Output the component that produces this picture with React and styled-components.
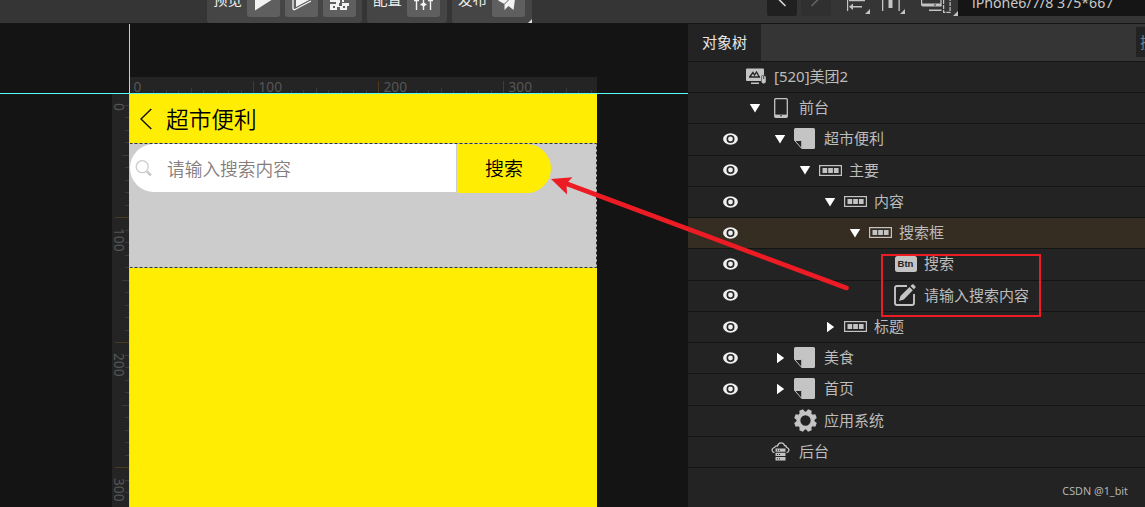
import React from "react";
import styled, { createGlobalStyle, css } from "styled-components";

const Global = createGlobalStyle`
  * { box-sizing: border-box; }
  html, body { margin: 0; height: 100%; overflow: hidden; background: #141414; }
  body { font-family: "Noto Sans", "Noto Sans CJK SC", sans-serif; font-weight: 370; }
  svg { display: block; flex: none; }
`;

const Frame = styled.div`
  position: relative;
  width: 1145px;
  height: 507px;
  overflow: hidden;
  display: flex;
  flex-direction: column;
  background: #141414;
`;

/* ---------- toolbar ---------- */
const Toolbar = styled.header`
  flex: none;
  display: flex;
  height: 23px;
  padding-left: 207px;
  background: #353535;
  margin-bottom: 1px;
  overflow: hidden;
`;
const Group = styled.div`
  flex: none;
  position: relative;
  display: flex;
  align-items: flex-end;
  width: ${(p) => p.$w}px;
  height: 23px;
  margin-right: 5px;
  padding: 0 7px 6px 6px;
  gap: 5px;
  background: #454545;
  border-radius: 0 0 3px 3px;
`;
const GroupLabel = styled.span`
  flex: 1;
  font-size: 14.5px;
  line-height: 20px;
  margin-bottom: 8px;
  color: #f0f0f0;
  white-space: nowrap;
`;
const ToolButton = styled.div`
  flex: none;
  display: flex;
  align-items: flex-end;
  justify-content: center;
  width: 33px;
  height: 33px;
  background: #5f5f5f;
  border-radius: 3px;
`;
const Corner = styled.i`
  position: absolute;
  right: 0;
  bottom: 0;
  border: 2.5px solid;
  border-color: transparent #dcdcdc #dcdcdc transparent;
`;
const RightTools = styled.div`
  flex: 1;
  display: flex;
  align-items: flex-start;
  padding-left: 230px;
`;
const NavButton = styled.div`
  flex: none;
  display: flex;
  justify-content: center;
  width: 30px;
  height: 16px;
  margin-right: 4px;
  border-radius: 0 0 2px 2px;
  background: ${(p) => (p.$off ? "#303030" : "#202020")};
`;
const AlignTools = styled.div`
  flex: none;
  width: 123px;
  padding-left: 11px;
`;
const Device = styled.div`
  flex: 1;
  height: 16px;
  padding-left: 14px;
  background: #151515;
  color: #c8c8c8;
  font-size: 14.2px;
  line-height: 20px;
  white-space: nowrap;
  overflow: hidden;
`;
const DeviceText = styled.div`
  margin-top: -7px;
`;

/* ---------- canvas ---------- */
const Body = styled.div`
  flex: 1;
  min-height: 0;
  display: flex;
`;
const Canvas = styled.section`
  flex: none;
  width: 688px;
  display: grid;
  grid-template-columns: 17px 468px;
  grid-template-rows: 17px 1fr;
  padding: 53px 91px 0 112px;
  background: #141414;
`;
const Blank = styled.div``;
const Ruler = styled.div`
  background: #242424;
  overflow: hidden;
`;
const Phone = styled.main`
  display: flex;
  flex-direction: column;
  background: #ffed04;
  font-family: "Noto Sans CJK SC", sans-serif;
  overflow: hidden;
`;
const TitleBar = styled.div`
  flex: none;
  display: flex;
  align-items: center;
  height: 49px;
  padding-left: 11px;
  gap: 14px;
  color: #000;
  font-size: 22.7px;
  font-weight: 350;
  line-height: 48px;
`;
const SearchArea = styled.div`
  flex: none;
  position: relative;
  display: flex;
  align-items: flex-start;
  gap: 1px;
  height: 125px;
  padding: 1px;
  background: #ccc;
`;
const Outline = styled.svg`
  position: absolute;
  inset: 0;
`;
const SearchInput = styled.div`
  display: flex;
  align-items: center;
  width: 326px;
  height: 48px;
  padding-left: 5px;
  gap: 14px;
  background: #fff;
  border-radius: 24px 0 0 24px;
  color: #857c7c;
  font-size: 17.7px;
  font-weight: 350;
`;
const SearchButton = styled.div`
  width: 94px;
  height: 49px;
  background: #ffed04;
  border-radius: 0 25px 25px 0;
  text-align: center;
  color: #000;
  font-size: 19px;
  font-weight: 350;
  line-height: 47px;
`;
const Guide = styled.div`
  position: absolute;
  background: #57fbfb;
  ${(p) =>
    p.$vertical
      ? css`left: 129px; top: 24px; width: 1px; height: 483px;`
      : css`left: 0; top: 93px; width: 688px; height: 1px;`}
`;

/* ---------- tree ---------- */
const Panel = styled.aside`
  flex: 1;
  background: #232323;
  overflow: hidden;
`;
const Tabs = styled.div`
  display: flex;
  justify-content: space-between;
  height: 37.75px;
  background: #353535;
  border-bottom: 1px solid #151515;
`;
const Tab = styled.div`
  width: 73px;
  background: #232323;
  color: #e6e6e6;
  font-size: 15px;
  line-height: 37px;
  text-align: center;
`;
const Filter = styled.div`
  width: 9px;
  height: 30px;
  margin-top: 3px;
  padding-left: 4px;
  background: #232323;
  color: #6d7f92;
  font-size: 15px;
  line-height: 30px;
  overflow: hidden;
`;
const Row = styled.div`
  display: flex;
  align-items: center;
  height: 31.25px;
  padding-bottom: 0.4px;
  border-bottom: 1px solid #141414;
  background: ${(p) => (p.$active ? "#362d22" : "#232323")};
  color: #bcbcbc;
  font-size: 15px;
  line-height: 29.6px;
`;
const EyeCell = styled.div`
  flex: none;
  width: 50px;
  padding-left: 35px;
`;
const Toggle = styled.div`
  flex: none;
  display: flex;
  justify-content: center;
  width: 16px;
  margin-left: ${(p) => p.$indent}px;
`;
const IconCell = styled.div`
  flex: none;
  display: flex;
  justify-content: center;
  width: 34px;
`;
const Name = styled.span`
  padding-left: 2px;
  white-space: nowrap;
`;
const Watermark = styled.div`
  position: absolute;
  right: 17px;
  top: 484px;
  color: #b4b4b4;
  font-size: 10.8px;
  font-weight: 400;
  line-height: 14px;
  white-space: nowrap;
`;
const Annotation = styled.svg`
  position: absolute;
  left: 0;
  top: 0;
`;

const C = "#c4c4c4";

const Eye = () => (
  <svg width="15" height="12" viewBox="0 0 15 12">
    <ellipse cx="7.5" cy="6" rx="7.4" ry="5.7" fill="#efefef" />
    <circle cx="7.5" cy="6" r="3.2" fill="none" stroke="#262626" strokeWidth="1.6" />
  </svg>
);

const Arrow = ({ open }) => (
  <svg width="12" height="12" viewBox="0 0 12 12">
    <path d={open ? "M.8 2h10.400L6 10.400z" : "M3 .8v10.400L10.200 6z"} fill="#fff" />
  </svg>
);

const icons = {
  project: (
    <svg width="22" height="17" viewBox="-2 0 22 17">
      <path d="M1 .5h16q1 0 1 1V7a3 3 0 0 0-3 3v3H1q-1 0-1-1V1.500q0-1 1-1zM5 14.500h8V16H5z" fill={C} />
      <path d="M3 9h11M4 8.500 7 4.500 8.500 7 10.500 4 13 8.500" fill="none" stroke="#232323" strokeWidth="1.300" />
      <rect x="15.500" y="7.500" width="4.300" height="8" rx="2.100" fill={C} />
      <path d="M17.700 8v3" stroke="#232323" strokeWidth=".8" />
    </svg>
  ),
  phone: (
    <svg width="15" height="20" viewBox="-1 0 15 20">
      <rect x=".7" y=".7" width="12.600" height="18.600" rx="1" fill="none" stroke={C} strokeWidth="1.300" />
      <path d="M1 17.800h12" stroke={C} strokeWidth="2.400" />
      <circle cx="7" cy="17.800" r=".8" fill="#232323" />
    </svg>
  ),
  page: (
    <svg width="22" height="22" viewBox="0 0 22 22">
      <path d="M1.500 0h18q1.500 0 1.500 1.500v18q0 1.500-1.500 1.500H8V12.500H0V1.500Q0 0 1.500 0z" fill={C} />
      <path d="M.7 12.500h7v8z" fill="#232323" stroke={C} strokeWidth="1" />
    </svg>
  ),
  row: (
    <svg width="23" height="11" viewBox="0 0 23 11">
      <rect x=".6" y=".6" width="21.800" height="9.800" fill="none" stroke={C} strokeWidth="1.200" />
      <path d="M3.500 3h4.700v5H3.500zM9.200 3h4.700v5H9.200zM14.900 3h4.700v5h-4.700z" fill={C} />
    </svg>
  ),
  edit: (
    <svg width="22" height="22" viewBox="0 0 22 22">
      <path d="M13 2H3Q1 2 1 4v15q0 2 2 2h15q2 0 2-2V10" fill="none" stroke={C} strokeWidth="1.900" />
      <path d="m5 17 1.500-5L15.500 3l3.300 3.300L9.800 15.500zM16.500 2 18 .5q.8-.7 1.600 0l1.700 1.700q.7.800 0 1.600L19.800 5.300z" fill={C} />
    </svg>
  ),
  gear: (
    <svg width="23" height="23" viewBox="-11.800 -11.800 23.600 23.600">
      <circle r="7.300" fill="none" stroke={C} strokeWidth="4" />
      {[22.5, 67.5, 112.5, 157.5, 202.5, 247.5, 292.5, 337.5].map((a) => (
        <path key={a} d="M-3-8.500-2-11.700H2L3-8.500z" transform={`rotate(${a})`} fill={C} />
      ))}
    </svg>
  ),
  cloud: (
    <svg width="19" height="19" viewBox="0 0 19 19">
      <path d="M3.500 10.500C.5 10 0 6.500 3.500 5.500 4.500 3.500 6 4 6.500 4 7.500 0 12.500 0 13.500 3.500c2 0 2 1.500 2 2 3.500 1 3 4.500 0 5" fill="none" stroke={C} strokeWidth="1.300" />
      <path d="M4.500 6.500h10v3.300h-10zM4.500 10.800h10v3.300h-10zM4.500 15.100h10v3.300h-10z" fill={C} />
      <path d="M6 8.200h1M8 8.200h1M6 12.500h1M8 12.500h1M6 16.800h1M8 16.800h1" stroke="#232323" />
    </svg>
  ),
};

const BtnBadge = styled.div`
  width: 22px;
  height: 16px;
  margin-left: 1px;
  border-radius: 2.5px;
  background: ${C};
  color: #232323;
  font: 700 9.5px/16px "Liberation Sans", sans-serif;
  text-align: center;
`;
icons.button = <BtnBadge>Btn</BtnBadge>;

const rows = [
  { depth: -1, icon: "project", name: "[520]美团2" },
  { depth: 0, icon: "phone", name: "前台", open: true },
  { depth: 1, icon: "page", name: "超市便利", open: true, eye: true },
  { depth: 2, icon: "row", name: "主要", open: true, eye: true },
  { depth: 3, icon: "row", name: "内容", open: true, eye: true },
  { depth: 4, icon: "row", name: "搜索框", open: true, eye: true, active: true },
  { depth: 5, icon: "button", name: "搜索", eye: true },
  { depth: 5, icon: "edit", name: "请输入搜索内容", eye: true },
  { depth: 3, icon: "row", name: "标题", open: false, eye: true },
  { depth: 1, icon: "page", name: "美食", open: false, eye: true },
  { depth: 1, icon: "page", name: "首页", open: false, eye: true },
  { depth: 1, icon: "gear", name: "应用系统" },
  { depth: 0, icon: "cloud", name: "后台" },
];

const TICK = "#3a3a3a";
const MAJOR = "#4d3b1b";
const rulerFont = '"Noto Sans", sans-serif';

const TopRuler = () => (
  <svg width="468" height="17">
    {Array.from({ length: 38 }, (_, i) => {
      const m = i % 10;
      if (i === 0 || i === 1 || (i > 10 && (m === 1 || m === 2))) return null;
      const h = m === 0 ? 12 : m === 5 ? 5 : 3;
      return <rect key={i} x={Math.floor(i * 12.5 - 0.5)} y={16 - h} width="1" height={h} fill={m ? TICK : MAJOR} />;
    })}
    {[0, 100, 200, 300].map((n) => (
      <text key={n} x={n * 1.25 + 4.5} y="14.500" fontSize="13.700" fill="#565656" fontFamily={rulerFont}>{n}</text>
    ))}
  </svg>
);

const LeftRuler = () => (
  <svg width="17" height="413">
    {Array.from({ length: 33 }, (_, i) => {
      const m = i % 10;
      if (i === 0) return null;
      const w = m === 0 ? 14 : m === 5 ? 7 : 4;
      return <rect key={i} x={17 - w} y={Math.floor(i * 12.5 - 1.5)} width={w} height="1" fill={m ? TICK : MAJOR} />;
    })}
    {[0, 100, 200, 300].map((n) => (
      <text key={n} transform={`translate(2 ${n * 1.25 + 9}) rotate(90)`} fontSize="13.700" fill="#565656" fontFamily={rulerFont}>{n}</text>
    ))}
  </svg>
);

export default function App() {
  return (
    <Frame>
      <Global />
      <Toolbar>
        <Group $w={155}>
          <GroupLabel>预览</GroupLabel>
          <ToolButton>
            <svg width="33" height="33"><path d="M8 8v18.500L24.500 16V8z" fill="#f2f2f2" /></svg>
          </ToolButton>
          <ToolButton>
            <svg width="33" height="33">
              <path d="M11 8v15L25 15.500V8z" fill="#f2f2f2" />
              <path d="M8 8v16q0 2 2 1.500L26 17" fill="none" stroke="#f2f2f2" strokeWidth="1.300" />
            </svg>
          </ToolButton>
          <ToolButton>
            <svg width="33" height="33">
              <path d="M8 12h6v4h3v3h-4v-1H7v-3h1zM7 20h6v-1h3v3h3v-3h7v3h-2v4h-7v-3h-3v3H7zM19 12h6v4h-4v2h-2z" fill="#f2f2f2" />
              <path d="M10 22h2v2h-2zM20 22h2v2h-2z" fill="#5f5f5f" />
            </svg>
          </ToolButton>
        </Group>
        <Group $w={80}>
          <GroupLabel>配置</GroupLabel>
          <ToolButton>
            <svg width="33" height="33">
              <path d="M9.500 10v16M16.500 10v16M23.500 10v16M13.500 20.500h6M7 16.500h5M21 16.500h5" stroke="#f2f2f2" strokeWidth="1.400" />
              <circle cx="16.500" cy="20.500" r="2" fill="#f2f2f2" />
            </svg>
          </ToolButton>
        </Group>
        <Group $w={80}>
          <GroupLabel>发布</GroupLabel>
          <ToolButton>
            <svg width="33" height="33">
              <path d="M6 16.500 24 8l-2.500 18-5-4-4 4v-6z" fill="#f2f2f2" />
              <path d="m12 20.500 7-7" stroke="#5f5f5f" />
            </svg>
          </ToolButton>
          <Corner />
        </Group>
        <RightTools>
          <NavButton>
            <svg width="30" height="16"><path d="m10.500-2 8 8" stroke="#d8d8d8" strokeWidth="1.600" /></svg>
          </NavButton>
          <NavButton $off>
            <svg width="30" height="16"><path d="m18.500-2-8 8" stroke="#646464" strokeWidth="1.600" /></svg>
          </NavButton>
          <AlignTools>
            <svg width="112" height="16" fill={C}>
              <path d="M1 0h1.200v11H1zM3 0h16v1.300H3zM4 6h12v1.400H4zM3 6.700 7 3.500v6.400zM24 9v5H19z" />
              <path d="M36 0h1.300v11H36zM42.500 0h4v8h-4zM52.500 0h1.300v11h-1.300zM59 9v5h-5z" />
              <path d="M75 3.500h20.500v3H77q-2 0-2-2zM83 9.500h12.500V11H83z" />
              <path d="M75.600 0v5M95 0v6M97.600 0v12.300h6.500V0" fill="none" stroke={C} strokeWidth="1.200" strokeDasharray="4 1" />
              <path d="M88 4.500h2v1h-2z" fill="#353535" />
              <path d="M112 11v5h-5z" />
            </svg>
          </AlignTools>
          <Device><DeviceText>iPhone6/7/8 375*667</DeviceText></Device>
        </RightTools>
      </Toolbar>

      <Body>
        <Canvas>
          <Blank />
          <Ruler><TopRuler /></Ruler>
          <Ruler><LeftRuler /></Ruler>
          <Phone>
            <TitleBar>
              <svg width="12" height="22"><path d="M11.300 1 1 11l10.300 10" fill="none" stroke="#111" strokeWidth="1.400" /></svg>
              超市便利
            </TitleBar>
            <SearchArea>
              <SearchInput>
                <svg width="18" height="18" viewBox="0 0 18 18">
                  <circle cx="7.200" cy="7.700" r="6" fill="none" stroke="#ccc" strokeWidth="1.300" />
                  <path d="m12 12.500 4 4" stroke="#ccc" strokeWidth="2.600" />
                </svg>
                请输入搜索内容
              </SearchInput>
              <SearchButton>搜索</SearchButton>
              <Outline width="468" height="125">
                <rect x=".5" y=".5" width="467" height="124" fill="none" stroke="#333" strokeDasharray="3 2" />
              </Outline>
            </SearchArea>
          </Phone>
        </Canvas>

        <Panel>
          <Tabs>
            <Tab>对象树</Tab>
            <Filter>搜</Filter>
          </Tabs>
          {rows.map((r) => (
            <Row key={r.name + r.depth} $active={r.active}>
              <EyeCell>{r.eye && <Eye />}</EyeCell>
              <Toggle $indent={9 + r.depth * 25}>
                {r.open !== undefined && <Arrow open={r.open} />}
              </Toggle>
              <IconCell>{icons[r.icon]}</IconCell>
              <Name>{r.name}</Name>
            </Row>
          ))}
        </Panel>
      </Body>

      <Guide />
      <Guide $vertical />
      <Annotation width="1145" height="507">
        <path d="M846.500 288 566 183.500" stroke="#ed1c24" strokeWidth="4.600" strokeLinecap="round" />
        <path d="m551 179 21.500-1.800-6 6.300.5 11z" fill="#ed1c24" />
        <rect x="882" y="255" width="158" height="61" fill="none" stroke="#ed1c24" strokeWidth="2" />
      </Annotation>
      <Watermark>CSDN @1_bit</Watermark>
    </Frame>
  );
}
